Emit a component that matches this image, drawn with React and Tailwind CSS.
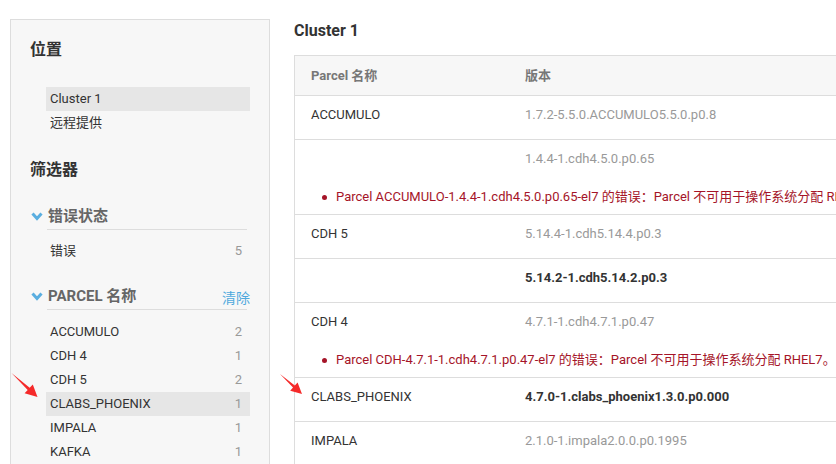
import React from "react";

const font = { fontFamily: 'Roboto, "Noto Sans CJK SC", sans-serif' };

const parcels = [
  { name: "ACCUMULO", count: 2 },
  { name: "CDH 4", count: 1 },
  { name: "CDH 5", count: 2 },
  { name: "CLABS_PHOENIX", count: 1, active: true },
  { name: "IMPALA", count: 1 },
  { name: "KAFKA", count: 1 },
];

const rows = [
  { name: "ACCUMULO", version: "1.7.2-5.5.0.ACCUMULO5.5.0.p0.8" },
  {
    name: "",
    version: "1.4.4-1.cdh4.5.0.p0.65",
    error: "Parcel ACCUMULO-1.4.4-1.cdh4.5.0.p0.65-el7 的错误：Parcel 不可用于操作系统分配 RHEL7。",
  },
  { name: "CDH 5", version: "5.14.4-1.cdh5.14.4.p0.3" },
  { name: "", version: "5.14.2-1.cdh5.14.2.p0.3", bold: true },
  {
    name: "CDH 4",
    version: "4.7.1-1.cdh4.7.1.p0.47",
    error: "Parcel CDH-4.7.1-1.cdh4.7.1.p0.47-el7 的错误：Parcel 不可用于操作系统分配 RHEL7。",
  },
  { name: "CLABS_PHOENIX", version: "4.7.0-1.clabs_phoenix1.3.0.p0.000", bold: true },
  { name: "IMPALA", version: "2.1.0-1.impala2.0.0.p0.1995" },
];

const Chevron = () => (
  <svg width="12" height="9" viewBox="0 0 12 9" className="shrink-0">
    <polyline points="1.5,1.5 6,6.5 10.5,1.5" fill="none" stroke="#5aaee0" strokeWidth="3" />
  </svg>
);

const ListItem = ({ label, count, active }) => (
  <div
    className={`flex justify-between h-[24px] leading-[24px] pl-[4px] pr-[8px] text-[13px] text-[#333] ${
      active ? "bg-[#e6e6e6]" : ""
    }`}
  >
    <span>{label}</span>
    {count !== undefined && <span className="text-[#999]">{count}</span>}
  </div>
);

const FilterHeader = ({ title, clear }) => (
  <div>
    <div className="flex items-center justify-between -ml-[15px] h-[20px]">
      <div className="flex items-center gap-[5px]">
        <Chevron />
        <span className="text-[15px] font-bold text-[#666]">{title}</span>
      </div>
      {clear && <span className="text-[14px] text-[#4fa9dd] mt-[4px]">{clear}</span>}
    </div>
    <div className="ml-[1px] mr-[3px] mt-[3px] h-px bg-[#dddddd]" />
  </div>
);

export default function App() {
  return (
    <div className="relative w-[836px] h-[464px] overflow-hidden bg-white" style={font}>
      <div className="flex pt-[19px]">
        {/* Sidebar */}
        <div className="ml-[10px] w-[260px] h-[470px] shrink-0 border border-[#dddddd] bg-[#f7f7f7] pt-[18px] pl-[19px] pr-[19px]">
          <h2 className="text-[16px] leading-[24px] font-bold text-[#333]">位置</h2>
          <div className="mt-[25px] ml-[16px]">
            <ListItem label="Cluster 1" active />
            <ListItem label="远程提供" />
          </div>

          <h2 className="mt-[23px] text-[16px] leading-[24px] font-bold text-[#333]">筛选器</h2>
          <div className="ml-[16px] mt-[24px]">
            <FilterHeader title="错误状态" />
            <div className="mt-[9px]">
              <ListItem label="错误" count={5} />
            </div>
            <div className="mt-[23px]">
              <FilterHeader title="PARCEL 名称" clear="清除" />
            </div>
            <div className="mt-[10px]">
              {parcels.map((p) => (
                <ListItem key={p.name} label={p.name} count={p.count} active={p.active} />
              ))}
            </div>
          </div>
        </div>

        {/* Main */}
        <div className="ml-[24px] shrink-0">
          <h1 className="text-[16px] leading-[24px] font-bold text-[#333]">Cluster 1</h1>
          <div className="mt-[12px] w-[640px] border-l border-t border-[#dddddd] text-[13px]">
            <div className="flex h-[40px] items-center bg-[#f7f7f7] border-b border-[#dddddd] font-bold text-[#777]">
              <div className="w-[230px] pl-[16px]">Parcel 名称</div>
              <div>版本</div>
            </div>
            {rows.map((r, i) => (
              <div key={i} className="border-b border-[#dddddd] pt-[9px] pb-[7px]">
                <div className="flex leading-[20px] pb-[7px]">
                  <div className="w-[230px] pl-[16px] text-[#333]">{r.name}</div>
                  <div className={r.bold ? "font-bold text-[#333]" : "text-[#999]"}>{r.version}</div>
                </div>
                {r.error && (
                  <div className="mt-[11px] flex items-center leading-[20px] pl-[27px] whitespace-nowrap text-[#a51428]">
                    <span className="w-[5px] h-[5px] rounded-full bg-[#a51428]" />
                    <span className="ml-[9px]">{r.error}</span>
                  </div>
                )}
              </div>
            ))}
          </div>
        </div>
      </div>

      {/* Annotation arrows */}
      <svg className="absolute left-0 top-0 pointer-events-none" width="836" height="464">
        <polygon
          points="11.5,373 29.7,387.8 32.8,384.5 37.5,397 24.6,393.3 27.7,390"
          fill="#f52a2a"
        />
        <polygon
          points="280,374 294.8,385.6 297.6,382.5 302,394 290.2,390.7 293,387.6"
          fill="#f52a2a"
        />
      </svg>
    </div>
  );
}
